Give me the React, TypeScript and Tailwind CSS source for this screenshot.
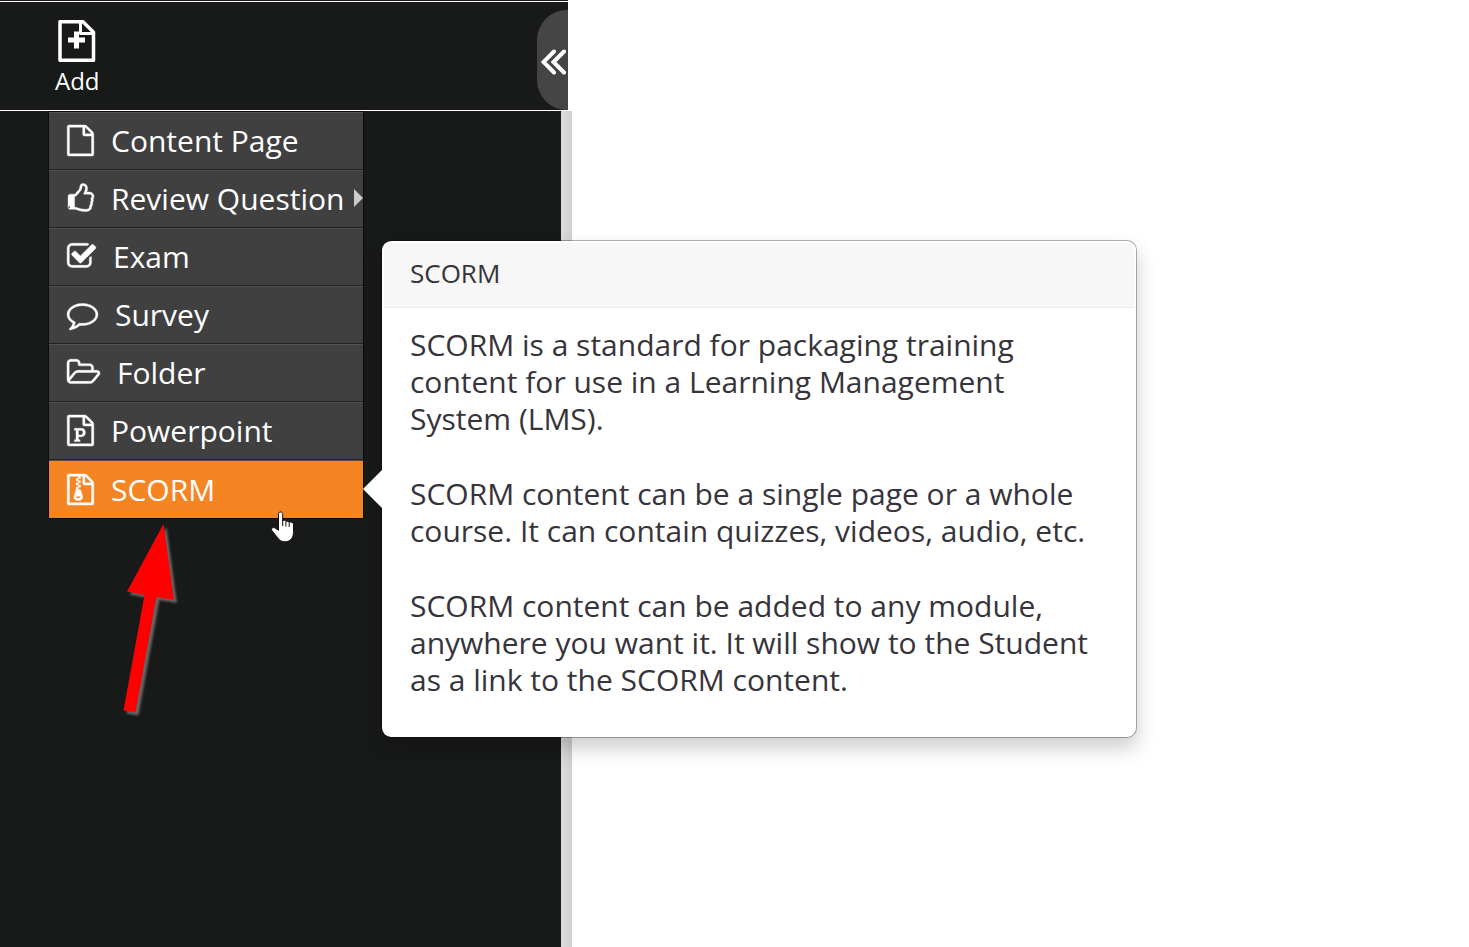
import type { ReactNode } from 'react';

const FILE_OUTLINE =
  'M1596 380q28 28 48 76t20 88v1152q0 40-28 68t-68 28h-1344q-40 0-68-28t-28-68v-1600q0-40 28-68t68-28h896q40 0 88 20t76 48zm-444-244v376h376q-10-29-22-41l-313-313q-12-12-41-22zm384 1528v-1024h-416q-40 0-68-28t-28-68v-416h-768v1536h1280z';

const ICONS = {
  file: FILE_OUTLINE,
  thumb:
    'M256 1408q0-26-19-45t-45-19-45 19-19 45 19 45 45 19 45-19 19-45zm1280-640q0-51-39-89.5t-89-38.5h-352q0-58 48-159.5t48-160.5q0-98-32-145t-128-47q-26 26-38 85t-30.5 125.5-59.5 109.5q-22 23-77 91-4 5-23 30t-31.5 41-34.5 42.5-40 44-38.5 35.5-40 27-35.5 9h-32v640h32q13 0 31.5 3t33 6.5 38 11 35 11.5 35.5 12.5 29 10.5q211 73 342 73h121q192 0 192-167 0-26-5-56 30-16 47.5-52.5t17.5-73.5-18-69q53-50 53-119 0-25-10-55.5t-25-47.5q32-1 53.5-47t21.5-81zm128-1q0 89-49 163 9 33 9 69 0 77-38 144 3 21 3 43 0 101-60 178 1 139-85 219.5t-227 80.5h-129q-96 0-189.5-22.5t-216.5-65.5q-116-40-138-40h-288q-53 0-90.5-37.5t-37.5-90.5v-640q0-53 37.5-90.5t90.5-37.5h274q36-24 137-155 58-75 107-128 24-25 35.5-85.5t30.5-126.5 62-108q39-37 90-37 84 0 151 32.5t102 101.5 35 186q0 93-48 192h176q104 0 180 76t76 179z',
  check:
    'M1472 930v318q0 119-84.5 203.5t-203.5 84.5h-832q-119 0-203.5-84.5t-84.5-203.5v-832q0-119 84.5-203.5t203.5-84.5h832q63 0 117 25 15 7 18 23 3 17-9 29l-49 49q-10 10-23 10-3 0-9-2-23-6-45-6h-832q-66 0-113 47t-47 113v832q0 66 47 113t113 47h832q66 0 113-47t47-113v-254q0-13 9-22l64-64q10-10 23-10 6 0 12 3 20 8 20 29zm231-489l-814 814q-24 24-57 24t-57-24l-430-430q-24-24-24-57t24-57l110-110q24-24 57-24t57 24l263 263 647-647q24-24 57-24t57 24l110 110q24 24 24 57t-24 57z',
  comment:
    'M896 384q-204 0-381.5 69.5t-282 187.5-104.5 255q0 112 71.5 213.5t201.5 175.5l87 50-27 96q-24 91-70 172 152-63 275-171l43-38 57 6q69 8 130 8 204 0 381.5-69.5t282-187.5 104.5-255-104.5-255-282-187.5-381.5-69.5zm896 512q0 174-120 321.5t-326 233-450 85.5q-70 0-145-8-198 175-460 242-49 14-114 22h-5q-15 0-27-10.5t-16-27.5v-1q-3-4-.5-12t2-10 4.5-9.5l6-9 7-8.5 8-9q7-8 31-34.5t34.5-38 31-39.5 32.5-51 27-59 26-76q-157-89-247.5-220t-90.5-281q0-174 120-321.5t326-233 450-85.5 450 85.5 326 233 120 321.5z',
  folder:
    'M1717 931q0-35-53-35h-1088q-40 0-85.5 21.5t-71.5 52.5l-294 363q-18 24-18 40 0 35 53 35h1088q40 0 86-22t71-53l294-363q18-22 18-39zm-1141-163h768v-160q0-40-28-68t-68-28h-576q-40 0-68-28t-28-68v-64q0-40-28-68t-68-28h-320q-40 0-68 28t-28 68v853l256-315q44-53 116-87.5t140-34.5zm1269 163q0 62-46 120l-295 363q-43 53-116 87.5t-140 34.5h-1088q-92 0-158-66t-66-158v-960q0-92 66-158t158-66h320q92 0 158 66t66 158v32h544q92 0 158 66t66 158v160h192q54 0 99 24.5t67 70.5q15 32 15 68z',
  powerpoint:
    FILE_OUTLINE +
    'm-992-234v106h327v-106h-93v-167h137q76 0 118-15 67-23 106.5-87t39.5-146q0-81-37-141t-100-87q-48-19-130-19h-368v107h92v555h-92zm353-280h-119v-268h120q52 0 83 18 56 33 56 115 0 89-62 120-31 15-78 15z',
  archive:
    'M768 384v-128h-128v128h128zm128 128v-128h-128v128h128zm-128 128v-128h-128v128h128zm128 128v-128h-128v128h128zm700-388q28 28 48 76t20 88v1152q0 40-28 68t-68 28h-1344q-40 0-68-28t-28-68v-1600q0-40 28-68t68-28h896q40 0 88 20t76 48zm-444-244v376h376q-10-29-22-41l-313-313q-12-12-41-22zm384 1528v-1024h-416q-40 0-68-28t-28-68v-416h-128v128h-128v-128h-512v1536h1280zm-627-721l107 349q8 27 8 52 0 83-72.5 137.5t-183.5 54.5-183.5-54.5-72.5-137.5q0-25 8-52 21-63 120-396v-128h128v128h79q22 0 39 13t23 34zm-141 465q53 0 90.5-19t37.5-45-37.5-45-90.5-19-90.5 19-37.5 45 37.5 45 90.5 19z',
};

interface MenuItem {
  label: string;
  icon: keyof typeof ICONS;
  viewBox: string;
  iconWidth: string;
  submenu?: boolean;
}

const ITEMS: MenuItem[] = [
  { label: 'Content Page', icon: 'file', viewBox: '128 0 1536 1792', iconWidth: 'w-[27px]' },
  { label: 'Review Question', icon: 'thumb', viewBox: '64 0 1600 1792', iconWidth: 'w-[27px]', submenu: true },
  { label: 'Exam', icon: 'check', viewBox: '64 0 1664 1792', iconWidth: 'w-[29px]' },
  { label: 'Survey', icon: 'comment', viewBox: '0 0 1792 1792', iconWidth: 'w-[31px]' },
  { label: 'Folder', icon: 'folder', viewBox: '-64 0 1909 1792', iconWidth: 'w-[33px]' },
  { label: 'Powerpoint', icon: 'powerpoint', viewBox: '128 0 1536 1792', iconWidth: 'w-[27px]' },
];

function MenuButton({ item, active }: { item: MenuItem; active?: boolean }) {
  return (
    <button
      className={
        active
          ? 'flex h-[58px] w-full items-center border-t border-[#505050] bg-[#f58423] pl-[18px] text-left'
          : 'flex h-[58px] w-full items-center border-t border-b border-t-[#505050] border-b-[#222] bg-[#404040] pb-[2px] pl-[18px] text-left hover:bg-[#4a4a4a]'
      }
    >
      <svg
        viewBox={item.viewBox}
        className={`mr-[17px] h-[31px] flex-shrink-0 overflow-visible ${item.iconWidth}`}
        fill="currentColor"
        stroke="currentColor"
        strokeWidth="24"
        aria-hidden="true"
      >
        <path d={ICONS[item.icon]} />
      </svg>
      <span className="whitespace-nowrap">{item.label}</span>
      {item.submenu && (
        <svg viewBox="0 0 9 18" className="ml-auto h-[18px] w-[9px] flex-shrink-0" fill="#ccc" aria-hidden="true">
          <path d="M0 0l9 9-9 9z" />
        </svg>
      )}
    </button>
  );
}

function Popover({ title, children }: { title: string; children: ReactNode }) {
  return (
    <div className="absolute top-1/2 left-full ml-[18px] w-[756px] -translate-y-1/2 rounded-[10px] border border-black/30 bg-white bg-clip-padding p-[2px] text-[#36343a] shadow-[0_10px_20px_rgba(0,0,0,0.2)]">
      <svg viewBox="0 0 19 38" className="absolute top-1/2 right-full h-[38px] w-[19px] -translate-y-1/2" fill="#fff" aria-hidden="true">
        <path d="M19 0v38L0 19z" />
      </svg>
      <h3 className="rounded-t-lg border-b border-[#ebebeb] bg-[#f7f7f7] px-[26px] pt-3 pb-[15px] text-[26px] leading-[37px]">{title}</h3>
      <div className="flex flex-col gap-[38px] px-[26px] pt-[18px] pb-[37px] leading-[37px]">{children}</div>
    </div>
  );
}

function Pointer() {
  return (
    <svg viewBox="0 0 24 32" className="pointer-events-none absolute top-[51px] left-[222px] h-8 w-6" aria-hidden="true">
      <path
        d="M7.5 3.2c0-3 4.2-3 4.2 0V10c1-1.2 3-.8 3.2.6 1.3-1 3-.3 3.3 1 1.700-1 4.300-.4 4.300 1.600v8.300c0 5.400-3.500 9.300-8.300 9.300-3.700 0-6-1.700-8-4.600L.9 19.500c-1.200-2.100 1-3.700 3.200-2.500l3.400 2.300z"
        fill="#fff"
        stroke="#111"
      />
      <path d="M11.700 9v6M14.900 11v4.500M18.200 12v4" stroke="#111" fill="none" />
    </svg>
  );
}

function RedArrow() {
  return (
    <svg viewBox="0 0 60 200" className="pointer-events-none absolute top-[62px] left-[71px] h-[200px] w-[60px] overflow-visible" aria-hidden="true">
      <path d="M43.500 2l10.500 76-17.500-3L15.500 190.500 3.500 188.500 24.500 73 7 69.500z" fill="red" className="drop-shadow-[3px_3px_1px_#666]" />
    </svg>
  );
}

export default function App() {
  return (
    <div className="min-h-screen bg-white font-['Open_Sans',sans-serif] text-[30px] text-white">
      <aside className="flex min-h-screen w-[572px] flex-col">
        <header className="mr-1 border-t border-[#181a19] bg-[#181a19]">
          <div className="flex h-[110px] justify-between border-y border-white pl-[55px]">
            <button className="flex flex-col items-center pt-[18px] text-2xl">
              <svg viewBox="0 0 38 42" className="h-[42px] w-[38px]" fill="none" stroke="#fff" strokeWidth="3.500" strokeLinejoin="round" aria-hidden="true">
                <path d="M2 1.700H25l10.500 10.500v28.100H2z" />
                <path d="M22.500 2v11.500H35" strokeWidth="3" />
                <path d="M18.500 11.500v17M10 20h17" strokeWidth="5" />
              </svg>
              <span className="leading-[38px]">Add</span>
            </button>
            <button className="mt-2 flex h-[100px] w-[31px] items-center rounded-l-[30px] bg-[#454545] pt-1 pl-1" aria-label="Collapse sidebar">
              <svg viewBox="0 0 26 26" className="h-[26px] w-[26px] flex-shrink-0" fill="none" stroke="#fff" strokeWidth="4" strokeLinecap="round" aria-hidden="true">
                <path d="M13 2.500L2.500 13 13 23.500M23 2.500L12.500 13 23 23.500" />
              </svg>
            </button>
          </div>
        </header>

        <div className="flex flex-1 bg-[#181a19]">
          <div className="flex-1 pl-12">
            <nav className="w-[316px] border border-[#0c0c0c]">
              {ITEMS.map((item) => (
                <MenuButton key={item.label} item={item} />
              ))}
              <div className="relative">
                <MenuButton item={{ label: 'SCORM', icon: 'archive', viewBox: '128 0 1536 1792', iconWidth: 'w-[27px]' }} active />
                <Popover title="SCORM">
                  <p>
                    SCORM is a standard for packaging training content for use in a Learning Management System (LMS).
                  </p>
                  <p>SCORM content can be a single page or a whole course. It can contain quizzes, videos, audio, etc.</p>
                  <p>
                    SCORM content can be added to any module, anywhere you want it. It will show to the Student as a link
                    to the SCORM content.
                  </p>
                </Popover>
                <Pointer />
                <RedArrow />
              </div>
            </nav>
          </div>
          <div className="w-[11px] bg-linear-to-r from-[#dcdcdc] to-[#cfcfcf]" />
        </div>
      </aside>
    </div>
  );
}
